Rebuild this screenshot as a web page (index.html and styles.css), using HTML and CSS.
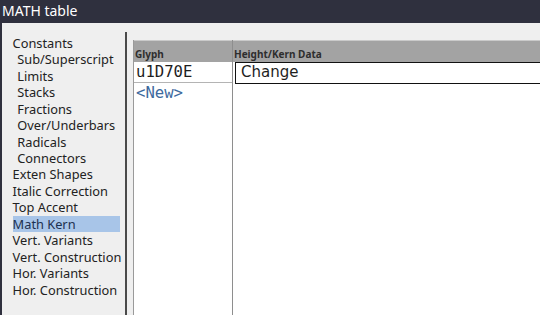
FILE: index.html
```html
<!DOCTYPE html>
<html lang="en">
<head>
<meta charset="UTF-8">
<title>MATH table</title>
<link rel="stylesheet" href="styles.css">
</head>
<body>

<div class="window">
    <div class="titlebar">MATH table</div>
    <div class="content">
        <ul class="sections">
            <li>Constants</li>
            <li class="sub">Sub/Superscript</li>
            <li class="sub">Limits</li>
            <li class="sub">Stacks</li>
            <li class="sub">Fractions</li>
            <li class="sub">Over/Underbars</li>
            <li class="sub">Radicals</li>
            <li class="sub">Connectors</li>
            <li>Exten Shapes</li>
            <li>Italic Correction</li>
            <li>Top Accent</li>
            <li class="selected">Math Kern</li>
            <li>Vert. Variants</li>
            <li>Vert. Construction</li>
            <li>Hor. Variants</li>
            <li>Hor. Construction</li>
        </ul>
        <div class="divider"></div>
        <div class="grid">
            <div class="col col-glyph">
                <div class="head">Glyph</div>
                <div class="cell glyph-name">u1D70E</div>
                <div class="cell new-row">&lt;New&gt;</div>
            </div>
            <div class="col col-data">
                <div class="head">Height/Kern Data</div>
                <div class="cell">
                    <div class="editbox">Change</div>
                </div>
            </div>
        </div>
    </div>
</div>

</body>
</html>
```

FILE: styles.css
```css
* {
    margin: 0;
    padding: 0;
    box-sizing: border-box;
}

body {
    font-family: "Noto Sans", sans-serif;
    width: 540px;
    height: 315px;
    overflow: hidden;
    background: #efefef;
}

.window {
    display: flex;
    flex-direction: column;
    height: 315px;
}

.titlebar {
    height: 23px;
    background: #2f303e;
    color: #ffffff;
    font-size: 14px;
    line-height: 21px;
    padding-left: 2px;
}

.content {
    flex: 1;
    display: flex;
    background: #efefef;
    border-left: 2px solid #2f303e;
}

.sections {
    list-style: none;
    width: 123px;
    padding: 11.8px 0 0 10.6px;
    font-size: 12.8px;
    line-height: 16.45px;
    color: #222;
}

.sections li {
    width: 107px;
    white-space: nowrap;
}

.sections .sub {
    padding-left: 4.7px;
}

.sections .selected {
    background: #a8c5e8;
    color: #1d3150;
}

.divider {
    width: 2px;
    margin-top: 9px;
    background: #4a4a4a;
}

.grid {
    flex: 1;
    display: flex;
    margin: 16.5px 0 0 6px;
    background: #ffffff;
    border-left: 1px solid #9a9a9a;
}

.col-glyph {
    width: 99px;
    border-right: 1px solid #8e8e8e;
}

.col-data {
    flex: 1;
}

.head {
    height: 22px;
    background: #a3a3a3;
    border-top: 1px solid #cacaca;
    font-size: 10px;
    font-weight: bold;
    color: #2e2e2e;
    line-height: 12px;
    padding: 7px 0 0 1px;
}

.cell {
    height: 21px;
}

.glyph-name,
.new-row {
    font-family: "DejaVu Sans Mono", monospace;
    font-size: 15.6px;
    line-height: 20px;
    padding-left: 2px;
    color: #1e1e1e;
}

.glyph-name {
    border-bottom: 1px solid #b4b4b4;
}

.new-row {
    color: #3d6a9e;
}

.editbox {
    height: 22px;
    margin-left: 2px;
    border: 1.5px solid #111;
    border-right: none;
    font-family: "DejaVu Sans", sans-serif;
    font-size: 15px;
    line-height: 18px;
    padding-left: 5px;
    color: #1e1e1e;
}
```
